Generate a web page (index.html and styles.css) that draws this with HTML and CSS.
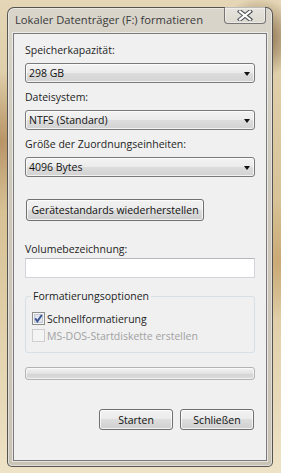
FILE: index.html
```html
<!DOCTYPE html>
<html lang="de">
  <head>
    <meta charset="UTF-8" />
    <meta name="viewport" content="width=device-width, initial-scale=1.0" />
    <title>Lokaler Datenträger (F:) formatieren</title>
    <link rel="stylesheet" href="styles.css">
  </head>
  <body>
    <div class="window">
      <div class="titlebar">
        <span class="title">Lokaler Datenträger (F:) formatieren</span>
        <button type="button" class="close" aria-label="Schließen">
          <svg width="16" height="11" viewBox="0 0 16 11">
            <path d="M3 1.5 L13 9.5 M13 1.5 L3 9.5" stroke="#4a4d55" stroke-width="4.2" stroke-linecap="square" fill="none" />
            <path d="M3 1.5 L13 9.5 M13 1.5 L3 9.5" stroke="#ffffff" stroke-width="2.2" stroke-linecap="square" fill="none" />
          </svg>
        </button>
      </div>

      <form class="client" id="formatDialog">
        <label class="field-label first">Speicherkapazität:</label>
        <div class="combo"><span>298 GB</span><span class="arrow"></span></div>

        <label class="field-label">Dateisystem:</label>
        <div class="combo"><span>NTFS (Standard)</span><span class="arrow"></span></div>

        <label class="field-label">Größe der Zuordnungseinheiten:</label>
        <div class="combo"><span>4096 Bytes</span><span class="arrow"></span></div>

        <div class="reset-row">
          <button type="button" class="btn reset">Gerätestandards wiederherstellen</button>
        </div>

        <label class="field-label volume-label">Volumebezeichnung:</label>
        <input type="text" class="textbox" value="" />

        <fieldset class="options">
          <legend>Formatierungsoptionen</legend>
          <div class="check-row">
            <svg class="check" width="13" height="13" viewBox="0 0 13 13">
              <rect x="0.5" y="0.5" width="12" height="12" fill="#f4f4f4" stroke="#8e8f8f" />
              <rect x="2.5" y="2.5" width="8" height="8" fill="#e3e6ee" stroke="#c4c9d6" />
              <path d="M3.2 6.4 L5.4 9.4 L9.8 3" stroke="#3b5592" stroke-width="1.9" fill="none" />
            </svg>
            <span>Schnellformatierung</span>
          </div>
          <div class="check-row disabled">
            <svg class="check" width="13" height="13" viewBox="0 0 13 13">
              <rect x="0.5" y="0.5" width="12" height="12" fill="#f4f4f4" stroke="#cfcfcf" />
            </svg>
            <span>MS-DOS-Startdiskette erstellen</span>
          </div>
        </fieldset>

        <div class="progress"></div>

        <div class="actions">
          <button type="button" class="btn">Starten</button>
          <button type="button" class="btn">Schließen</button>
        </div>
      </form>
    </div>
  </body>
</html>
```

FILE: styles.css
```css
html,
body {
  margin: 0;
  padding: 0;
}
body {
  width: 281px;
  height: 473px;
  overflow: hidden;
  font-family: "Open Sans", "Liberation Sans", sans-serif;
  font-size: 10.5px;
  color: #1e1e1e;
  background:
    radial-gradient(circle at 92% 8%, #7d5e3a 0, rgba(125, 94, 58, 0) 40px),
    radial-gradient(circle at 0% 30%, #b89466 0, rgba(184, 148, 102, 0) 70px),
    radial-gradient(circle at 100% 55%, #c9a873 0, rgba(201, 168, 115, 0) 60px),
    linear-gradient(#e4d6b6, #d7c195 45%, #eee3c6 100%);
}
.window {
  box-sizing: border-box;
  margin: 7px 0 0 7px;
  width: 266px;
  height: 460px;
  display: flex;
  flex-direction: column;
  border: 1px solid rgba(55, 55, 55, 0.8);
  border-radius: 7px 7px 5px 5px;
  background: linear-gradient(#d9d5cb, #cdc8bb 40%, #c9c4b6);
  box-shadow: inset 0 0 0 1px rgba(255, 255, 255, 0.45);
}
.titlebar {
  display: flex;
  justify-content: space-between;
  height: 25px;
}
.title {
  margin: 4px 0 0 7px;
  line-height: 15px;
  font-size: 11.2px;
  color: #3a3a3a;
  white-space: nowrap;
}
.close {
  box-sizing: border-box;
  margin: -1px 6px 0 0;
  width: 42px;
  height: 17px;
  padding: 0;
  display: flex;
  align-items: center;
  justify-content: center;
  border: 1px solid rgba(60, 60, 60, 0.65);
  border-top: none;
  border-radius: 0 0 4px 4px;
  background: linear-gradient(rgba(255, 255, 255, 0.35), rgba(255, 255, 255, 0.15));
  box-shadow: inset 0 0 0 1px rgba(255, 255, 255, 0.4);
}
.client {
  box-sizing: border-box;
  flex: 1;
  margin: 0 5px 5px 5px;
  padding: 9px 11px 0 11px;
  display: flex;
  flex-direction: column;
  background: #f0f0f0;
  border: 1px solid #7b7b7b;
  box-shadow: 0 0 0 1px rgba(255, 255, 255, 0.55);
}
.field-label {
  display: block;
  line-height: 15px;
  margin-top: 7px;
}
.field-label.first {
  margin-top: 0;
}
.combo {
  box-sizing: border-box;
  margin-top: 5px;
  height: 20px;
  padding: 0 4px 0 3px;
  display: flex;
  align-items: center;
  justify-content: space-between;
  border: 1px solid #7a7a7a;
  border-radius: 3px;
  background: linear-gradient(#f3f3f3, #ebebeb 50%, #dddddd 50%, #d2d2d2);
  box-shadow: inset 0 0 0 1px rgba(255, 255, 255, 0.7);
  color: #111;
}
.arrow {
  width: 0;
  height: 0;
  border-left: 3.5px solid transparent;
  border-right: 3.5px solid transparent;
  border-top: 4px solid #111;
  margin-top: 1px;
}
.btn {
  box-sizing: border-box;
  height: 21px;
  padding: 0;
  font-family: inherit;
  font-size: 10.5px;
  color: #111;
  white-space: nowrap;
  border: 1px solid #707070;
  border-radius: 3px;
  background: linear-gradient(#f2f2f2, #ebebeb 50%, #dddddd 50%, #cfcfcf);
  box-shadow: inset 0 0 0 1px rgba(255, 255, 255, 0.75);
}
.reset-row {
  margin-top: 22px;
  display: flex;
}
.reset {
  margin-left: 1px;
  width: 178px;
  height: 22px;
}
.volume-label {
  margin-top: 21px;
}
.textbox {
  box-sizing: border-box;
  margin: 1px 0 0 0;
  width: 100%;
  height: 20px;
  border: 1px solid #d2d4da;
  border-top-color: #b5b7bd;
  background: #fff;
}
.options {
  margin: 11px 0 0 0;
  padding: 0 0 8px 5px;
  border: 1px solid #d5dfe5;
  border-radius: 3px;
}
.options legend {
  padding: 0 2px;
  line-height: 15px;
  color: #1e1e1e;
}
.check-row {
  display: flex;
  align-items: center;
  height: 17px;
  padding-left: 1px;
}
.check-row:first-of-type {
  margin-top: 6px;
}
.check {
  margin-right: 2px;
  flex: none;
}
.check-row.disabled {
  color: #a2a2a2;
}
.progress {
  box-sizing: border-box;
  margin-top: 14px;
  height: 13px;
  border: 1px solid #b3b3b3;
  border-radius: 3px;
  background: linear-gradient(#f3f3f3, #e2e2e2 50%, #d3d3d3 51%, #dcdcdc);
  box-shadow: inset 0 0 0 1px rgba(255, 255, 255, 0.6);
}
.actions {
  margin-top: 29px;
  display: flex;
  justify-content: flex-end;
  gap: 7px;
  padding-right: 1px;
}
.actions .btn {
  width: 74px;
}
```
